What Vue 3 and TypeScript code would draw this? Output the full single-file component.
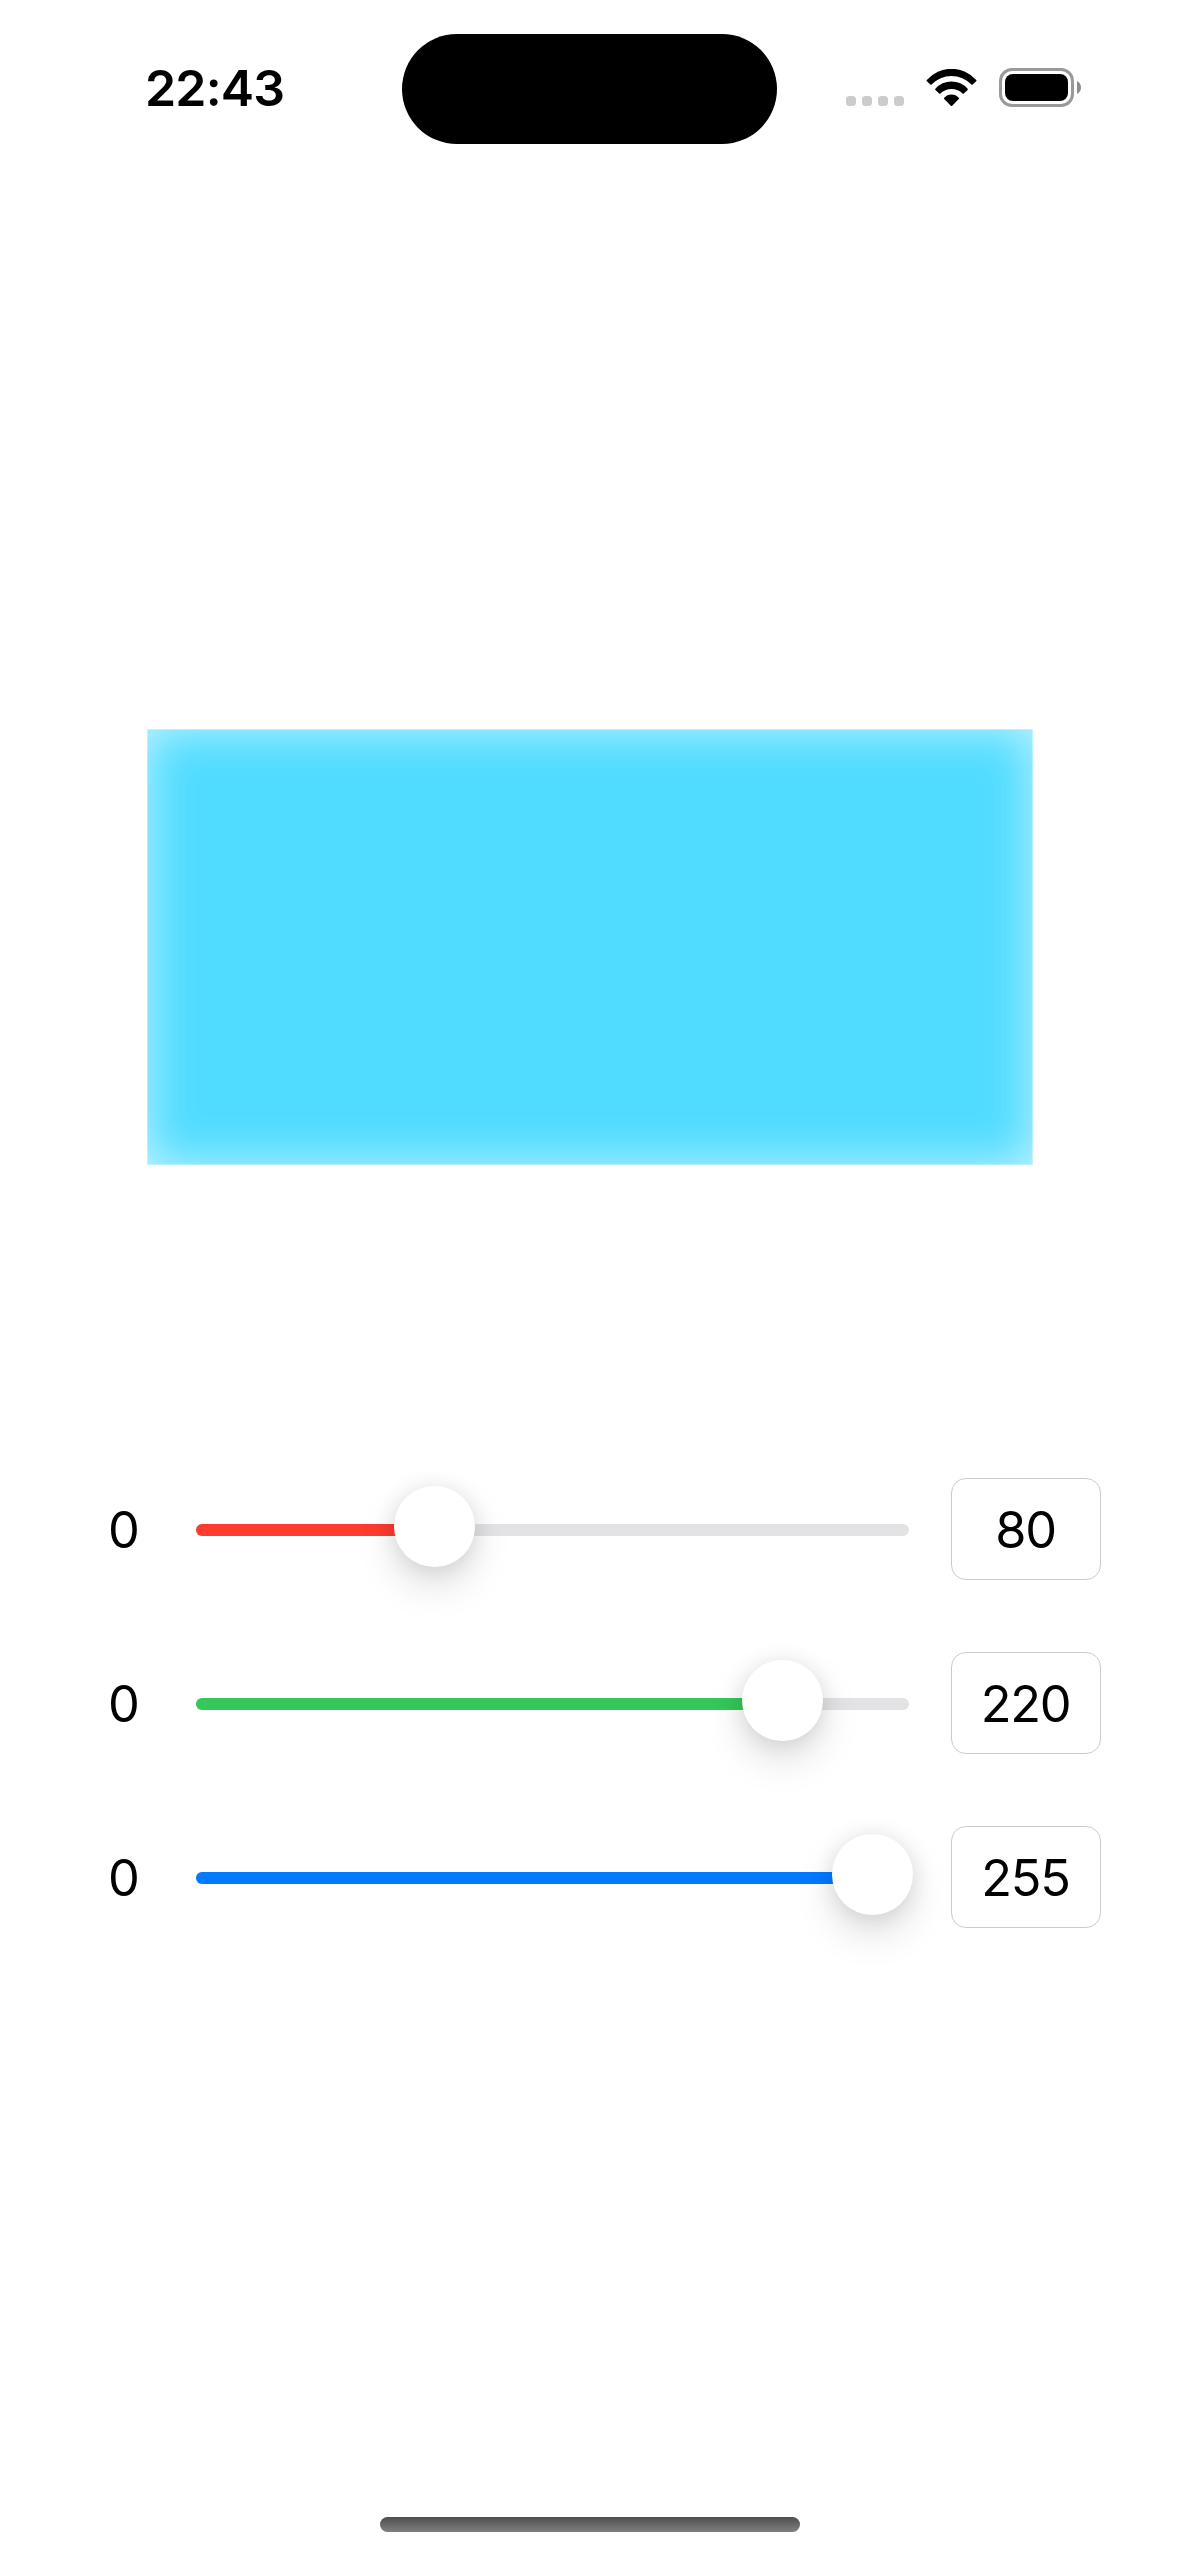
<script setup lang="ts">
import { computed, reactive } from 'vue'

interface Channel {
  name: string
  value: number
  left: number
  tint: string
}

const channels = reactive<Channel[]>([
  { name: 'red', value: 80, left: 198, tint: '#ff3b30' },
  { name: 'green', value: 220, left: 546, tint: '#34c759' },
  { name: 'blue', value: 255, left: 636, tint: '#007aff' },
])

const mixed = computed(() => `rgb(${channels.map((c) => c.value).join(', ')})`)
</script>

<template>
  <main class="screen">
    <header class="status">
      <div class="time">22:43</div>
      <div class="island"></div>
      <div class="indicators">
        <div class="dots"><i v-for="n in 4" :key="n"></i></div>
        <svg class="wifi" width="51" height="38" viewBox="0 0 51 38">
          <path d="M0.8 11 A32.8 32.8 0 0 1 50.2 11 Q50.8 11.6 50.2 12.2 L46.6 15.6 Q46 16.2 45.4 15.6 A27.4 27.4 0 0 0 5.6 15.6 Q5 16.2 4.4 15.6 L0.8 12.2 Q0.2 11.6 0.8 11Z" />
          <path d="M9.4 19.8 A21.2 21.2 0 0 1 41.6 19.8 Q42.2 20.4 41.6 21 L37.8 24.6 Q37.2 25.2 36.6 24.6 A15.6 15.6 0 0 0 14.4 24.6 Q13.8 25.2 13.2 24.6 L9.4 21 Q8.8 20.4 9.4 19.8Z" />
          <path d="M18.2 28.8 A9.6 9.6 0 0 1 32.8 28.8 Q33.4 29.4 32.8 30.1 L26.2 36.7 Q25.5 37.4 24.8 36.7 L18.2 30.1 Q17.6 29.4 18.2 28.8Z" />
        </svg>
        <svg class="battery" width="82" height="39" viewBox="0 0 82 39">
          <rect x="1.5" y="1.5" width="72" height="36" rx="11.5" fill="none" stroke="#999" stroke-width="3" />
          <rect x="6" y="6" width="63" height="27" rx="8" />
          <path d="M78 13 A7.3 7.3 0 0 1 78 26Z" fill="#8c8c8c" />
        </svg>
      </div>
    </header>

    <section class="preview" :style="{ backgroundColor: mixed }"></section>

    <section class="sliders">
      <div v-for="c in channels" :key="c.name" class="row">
        <span class="min">0</span>
        <div class="track">
          <div class="fill" :style="{ width: c.left + 40 + 'px', backgroundColor: c.tint }"></div>
          <div class="thumb" :style="{ left: c.left + 'px' }"></div>
        </div>
        <div class="field">{{ c.value }}</div>
      </div>
    </section>

    <div class="home"></div>
  </main>
</template>

<style>
body {
  background: #fff;
}
</style>

<style scoped>
.screen {
  display: flex;
  flex-direction: column;
  box-sizing: border-box;
  width: 1179px;
  height: 2556px;
  overflow: hidden;
  background: #fff;
  color: #000;
  font-family: Inter, 'Liberation Sans', sans-serif;
}
.status {
  display: grid;
  grid-template-columns: 402px 375px 402px;
  height: 177px;
  flex: none;
}
.time {
  margin: 58px 0 0 145px;
  font-size: 50px;
  line-height: 60px;
  font-weight: 600;
  letter-spacing: -0.8px;
}
.island {
  height: 110px;
  margin-top: 34px;
  border-radius: 55px;
  background: #000;
}
.indicators {
  display: flex;
  align-items: flex-start;
  padding: 68px 0 0 69px;
}
.dots {
  display: flex;
  gap: 6px;
  margin-top: 28px;
}
.dots i {
  width: 10px;
  height: 10px;
  border-radius: 3.5px;
  background: #ccc;
}
.wifi {
  margin: 1px 0 0 22px;
}
.battery {
  margin-left: 22px;
}
.preview {
  flex: none;
  width: 886px;
  height: 436px;
  margin: 552px 0 0 147px;
  box-shadow:
    inset 0 0 0 1px rgba(255, 255, 255, 0.35),
    inset 0 0 48px rgba(255, 255, 255, 0.68);
}
.sliders {
  display: flex;
  flex-direction: column;
  gap: 72px;
  margin-top: 313px;
}
.row {
  display: flex;
  align-items: center;
  height: 102px;
}
.min {
  width: 88px;
  margin-left: 108px;
  padding-top: 2px;
  font-size: 50.5px;
  line-height: 60px;
}
.track {
  position: relative;
  width: 713px;
  height: 12px;
  margin-top: 2px;
  border-radius: 6px;
  background: #e3e3e5;
}
.fill {
  height: 12px;
  border-radius: 6px 0 0 6px;
}
.thumb {
  position: absolute;
  top: -38px;
  width: 81px;
  height: 81px;
  border-radius: 50%;
  background: #fff;
  box-shadow:
    0 18px 39px rgba(0, 0, 0, 0.13),
    0 2px 22px rgba(0, 0, 0, 0.1);
}
.field {
  box-sizing: border-box;
  width: 150px;
  height: 102px;
  margin-left: 42px;
  padding-right: 1px;
  border: 1px solid #cbcbcb;
  border-radius: 15px;
  font-size: 50.5px;
  line-height: 101px;
  text-align: center;
  letter-spacing: -1.3px;
}
.home {
  width: 420px;
  height: 15px;
  margin: auto auto 24px 380px;
  border-radius: 7.5px;
  background: linear-gradient(#4e4e4e, #808080);
}
</style>
